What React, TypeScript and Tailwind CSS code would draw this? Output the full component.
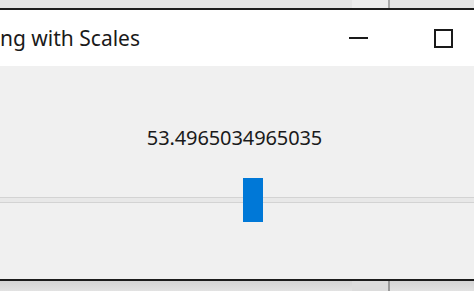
export default function App() {
  return (
    <div className="flex h-[291px] w-[474px] flex-col overflow-hidden bg-white" style={{ fontFamily: '"Noto Sans", "Open Sans", sans-serif' }}>
      {/* desktop strip above the window */}
      <div className="flex h-[8px] bg-[#e4e4e4]">
        <div className="w-[352px]" />
        <div className="w-[36px] bg-[#ececec]" />
        <div className="w-[2px] bg-[#a8a8a8]" />
        <div className="flex-1" />
      </div>
      <div className="h-[2px] bg-[#1c1c1c]" />

      {/* title bar */}
      <div className="flex h-[56px] items-center bg-white">
        <span className="text-[21px] leading-none text-[#1a1a1a]">ng with Scales</span>
        <div className="ml-auto flex items-center">
          <div className="mr-[66px] h-[2px] w-[19px] bg-[#1a1a1a]" />
          <div className="mr-[21px] h-[19px] w-[19px] border-2 border-[#1a1a1a]" />
        </div>
      </div>

      {/* window body */}
      <div className="flex h-[213px] flex-col bg-[#f0f0f0]">
        <div className="mt-[57px] h-[30px] pr-[5px] text-center text-[20px] leading-[30px] tracking-[-0.1px] text-[#1a1a1a]">53.4965034965035</div>
        <div className="relative mt-[25px] flex h-[44px] items-center">
          <div className="h-[6px] w-full border-y border-[#d3d3d3] bg-[#e8e8e8]" />
          <div className="absolute left-[243px] top-0 h-[44px] w-[20px] bg-[#0078d7]" />
        </div>
      </div>

      <div className="h-[2px] bg-[#1c1c1c]" />
      {/* desktop strip below the window */}
      <div className="flex h-[10px] bg-gradient-to-b from-[#d4d4d4] to-[#e2e2e2]">
        <div className="w-[352px]" />
        <div className="w-[36px] bg-[#dcdcdc]" />
        <div className="w-[2px] bg-[#9a9a9a]" />
        <div className="flex-1" />
      </div>
    </div>
  );
}
